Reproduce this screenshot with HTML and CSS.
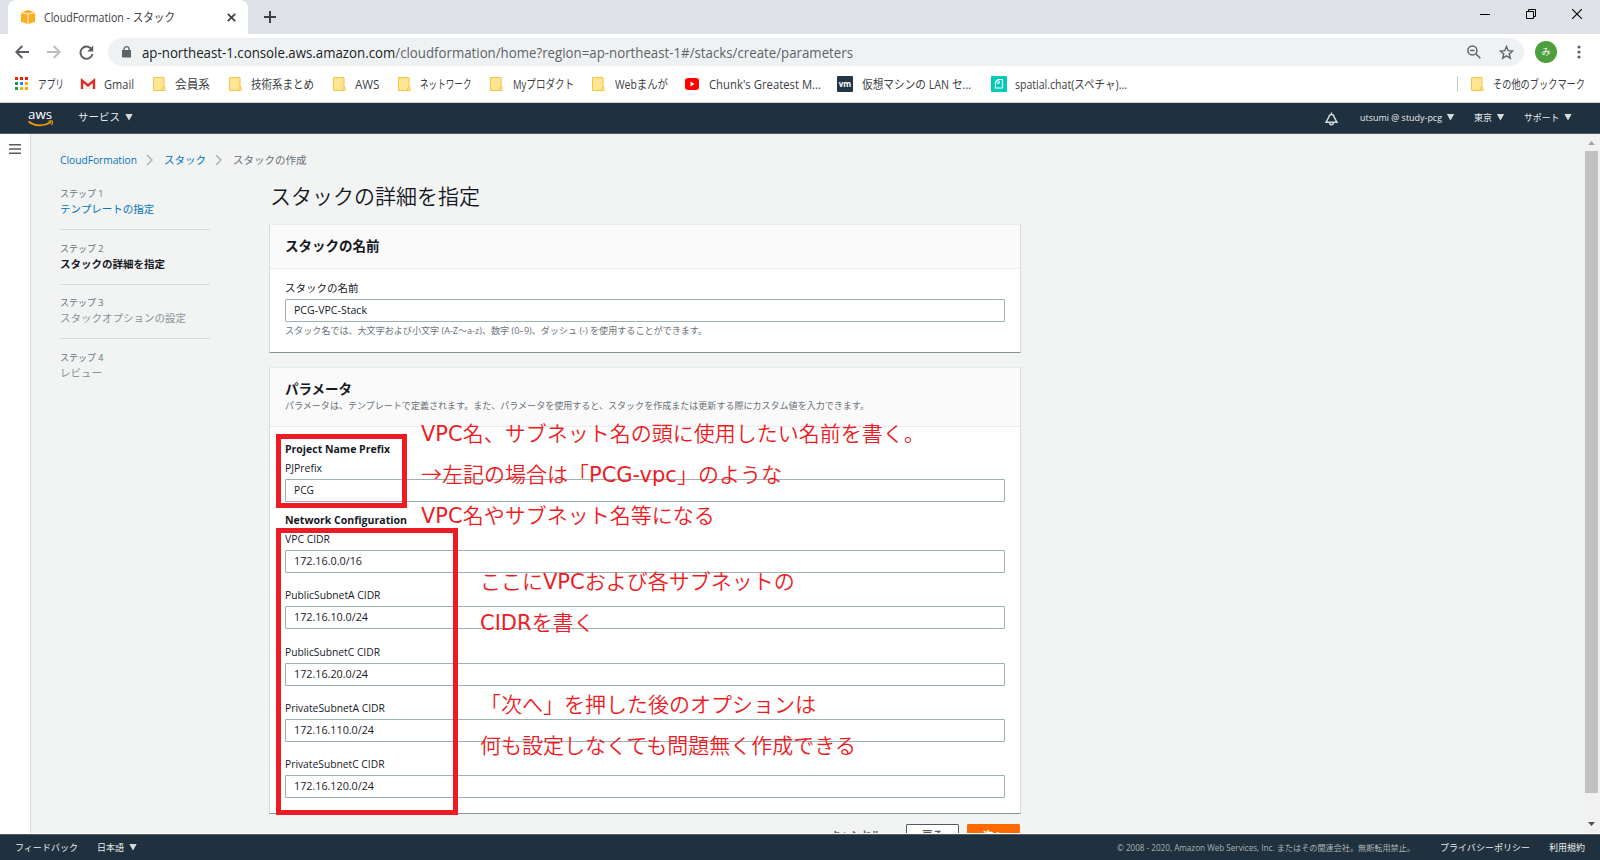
FILE: index.html
```html
<!DOCTYPE html>
<html lang="ja">
<head>
<meta charset="utf-8">
<title>CloudFormation - スタック</title>
<link rel="stylesheet" href="styles.css">
</head>
<body>
<svg width="0" height="0" class="defs">
  <symbol id="folder" viewBox="0 0 16 16"><path d="M2.5 1.5h10.5v9.5h1v3.5H2.5z" fill="#ffe694" stroke="#f6c445"/><path d="M11.7 14v-2.6l1-.9" fill="none" stroke="#f6c445"/></symbol>
</svg>

<header class="browser">
  <div class="tabstrip">
    <div class="tab">
      <svg class="tab-icon" width="16" height="16" viewBox="0 0 16 16"><path d="M8 1l7 2.2v9.6L8 15.3 1 12.8V3.2z" fill="#ffad1f"/><path d="M1.2 3.4L8 5.2l6.8-1.8M8 5.2v10" fill="none" stroke="#fff1c9" stroke-width="1.2"/></svg>
      <span class="fit tab-title" data-w="131">CloudFormation - スタック</span>
      <svg class="tab-close" width="9" height="9" viewBox="0 0 9 9"><path d="M.8.8l7.4 7.4M8.2.8L.8 8.2" stroke="#3c4043" stroke-width="1.7"/></svg>
    </div>
    <svg class="new-tab" width="12" height="12" viewBox="0 0 12 12"><path d="M6 0v12M0 6h12" stroke="#3c4043" stroke-width="2"/></svg>
    <div class="window-controls">
      <svg width="10" height="10" viewBox="0 0 10 10"><path d="M0 5.5h10" stroke="#000"/></svg>
      <svg width="10" height="10" viewBox="0 0 10 10"><path d="M.5 2.5h7v7h-7zM2.5 2.5v-2h7v7h-2" fill="none" stroke="#000"/></svg>
      <svg width="10" height="10" viewBox="0 0 10 10"><path d="M0 0l10 10M10 0L0 10" stroke="#000" stroke-width="1.1"/></svg>
    </div>
  </div>

  <div class="toolbar">
    <svg width="14" height="14" viewBox="0 0 14 14"><path d="M14 7H1.5M7.3 1L1.3 7l6 6" fill="none" stroke="#5a5d61" stroke-width="1.9"/></svg>
    <svg width="14" height="14" viewBox="0 0 14 14"><path d="M0 7h12.5M6.7 1l6 6-6 6" fill="none" stroke="#b9bbbe" stroke-width="1.8"/></svg>
    <svg width="15" height="15" viewBox="0 0 15 15"><path d="M12.6 4.2A6.1 6.1 0 1 0 13.5 9" fill="none" stroke="#5a5d61" stroke-width="1.9"/><path d="M14.2.5v6h-6z" fill="#5a5d61"/></svg>
    <div class="omnibox">
      <svg width="9" height="12" viewBox="0 0 9 12"><path d="M0 4h9v7.5H0z" fill="#5f6368"/><path d="M2 4.500V3a2.500 2.300 0 0 1 5 0v1.500" fill="none" stroke="#5f6368" stroke-width="1.300"/></svg>
      <span class="fit url" data-w="711"><span class="host">ap-northeast-1.console.aws.amazon.com</span>/cloudformation/home?region=ap-northeast-1#/stacks/create/parameters</span>
      <svg class="zoom-icon" width="14" height="14" viewBox="0 0 14 14"><circle cx="5.4" cy="5.4" r="4.5" fill="none" stroke="#5f6368" stroke-width="1.5"/><path d="M3.2 5.4h4.4M8.8 8.8l4.5 4.5" stroke="#5f6368" stroke-width="1.5"/></svg>
      <svg width="15" height="15" viewBox="0 0 15 15"><path d="M7.5 1.5l1.7 4.2 4.4.3-3.4 2.900 1.100 4.400-3.800-2.400-3.800 2.400 1.100-4.400L1.400 6l4.400-.3z" fill="none" stroke="#5f6368" stroke-width="1.400"/></svg>
    </div>
    <div class="avatar">み</div>
    <svg width="4" height="14" viewBox="0 0 4 14" fill="#5f6368"><circle cx="2" cy="2" r="1.6"/><circle cx="2" cy="7" r="1.6"/><circle cx="2" cy="12" r="1.6"/></svg>
  </div>

  <nav class="bookmarks">
    <a class="bm"><svg viewBox="0 0 16 16"><path d="M2 1h3v3H2zM7 1h3v3H7zM12 1h3v3h-3z" fill="#f21d0d"/><path d="M2 6h3v3H2zM2 11h3v3H2z" fill="#0f9d58"/><path d="M7 6h3v3H7z" fill="#1a8cff"/><path d="M12 6h3v3h-3zM7 11h3v3H7zM12 11h3v3h-3z" fill="#f9ab00"/></svg><span class="fit" data-w="26">アプリ</span></a>
    <a class="bm"><svg viewBox="0 0 16 16"><path d="M1 3h14v10H1z" fill="#f2f2f2"/><path d="M2 13V4.5l6 5 6-5V13" fill="none" stroke="#d93025" stroke-width="2.4"/></svg><span class="fit" data-w="30">Gmail</span></a>
    <a class="bm"><svg><use href="#folder"/></svg><span class="fit" data-w="35">会員系</span></a>
    <a class="bm"><svg><use href="#folder"/></svg><span class="fit" data-w="63">技術系まとめ</span></a>
    <a class="bm"><svg><use href="#folder"/></svg><span class="fit" data-w="24.5">AWS</span></a>
    <a class="bm"><svg><use href="#folder"/></svg><span class="fit" data-w="51.5">ネットワーク</span></a>
    <a class="bm"><svg><use href="#folder"/></svg><span class="fit" data-w="61">Myプロダクト</span></a>
    <a class="bm"><svg><use href="#folder"/></svg><span class="fit" data-w="53">Webまんが</span></a>
    <a class="bm"><svg viewBox="0 0 16 16"><rect x="1" y="2" width="14" height="12" rx="3" fill="#f00"/><path d="M6.5 5.5v5l4-2.5z" fill="#fff"/></svg><span class="fit" data-w="112">Chunk's Greatest M...</span></a>
    <a class="bm"><svg viewBox="0 0 16 16"><rect width="16" height="16" rx="1" fill="#253746"/><text x="8" y="10.5" class="vm" text-anchor="middle">vm</text></svg><span class="fit" data-w="109">仮想マシンの LAN セ...</span></a>
    <a class="bm last"><svg viewBox="0 0 16 16"><rect width="16" height="16" rx="1" fill="#00cdb8"/><path d="M7 3.500h4.500v8.500h-7V6zM8 4.500v2.700H6" fill="none" stroke="#fff" stroke-width="1.200"/></svg><span class="fit" data-w="112">spatial.chat(スペチャ)...</span></a>
    <a class="bm other"><svg><use href="#folder"/></svg><span class="fit" data-w="92">その他のブックマーク</span></a>
  </nav>
</header>

<div class="aws-nav">
  <svg class="aws-logo" width="26" height="20" viewBox="0 -2 26 20"><text x="0" y="8.800" class="aws-word" textLength="24" lengthAdjust="spacingAndGlyphs">aws</text><path d="M.5 11.500c6.500 5 15.500 5 22.300.8" fill="none" stroke="#f90" stroke-width="1.600"/><path d="M20.500 11.300c4-.9 4.900-.3 3.200 3.700" fill="none" stroke="#f90" stroke-width="1.300"/></svg>
  <span class="fit services" data-w="42">サービス</span><i class="tri"></i>
  <svg class="bell" width="13" height="14" viewBox="0 0 13 14"><path d="M1 10.300h11L9.200 5.200Q8.700 2.500 6.500 2.500T3.800 5.200zM6.500 2.500V.6M4.600 10.800a1.900 1.900 0 0 0 3.800 0" fill="none" stroke="#d5dbdb" stroke-width="1.400"/></svg>
  <span class="fit user" data-w="82">utsumi @ study-pcg</span><i class="tri"></i>
  <span class="fit menu" data-w="18">東京</span><i class="tri"></i>
  <span class="fit menu" data-w="35.5">サポート</span><i class="tri"></i>
</div>

<div class="console">
  <aside class="rail"><svg width="12" height="10" viewBox="0 0 12 10"><path d="M0 .8h12M0 5h12M0 9.200h12" stroke="#545b64" stroke-width="1.400"/></svg></aside>

  <main class="page">
    <div class="crumbs">
      <a class="fit" data-w="77">CloudFormation</a>
      <svg width="7" height="12" viewBox="0 0 7 12"><path d="M1 1l5 5-5 5" fill="none" stroke="#aab7b8" stroke-width="1.500"/></svg>
      <a>スタック</a>
      <svg width="7" height="12" viewBox="0 0 7 12"><path d="M1 1l5 5-5 5" fill="none" stroke="#aab7b8" stroke-width="1.500"/></svg>
      <span>スタックの作成</span>
    </div>

    <div class="columns">
      <ol class="steps">
        <li><small>ステップ 1</small><a>テンプレートの指定</a></li>
        <li><small>ステップ 2</small><b>スタックの詳細を指定</b></li>
        <li><small>ステップ 3</small><span>スタックオプションの設定</span></li>
        <li><small>ステップ 4</small><span>レビュー</span></li>
      </ol>

      <div class="content">
        <h1>スタックの詳細を指定</h1>

        <section class="card name-card">
          <header><h2>スタックの名前</h2></header>
          <div class="card-body">
            <label>スタックの名前</label>
            <div class="input"><span class="fit" data-w="73">PCG-VPC-Stack</span></div>
            <p class="hint"><span class="fit" data-w="422">スタック名では、大文字および小文字 (A-Z～a-z)、数字 (0–9)、ダッシュ (-) を使用することができます。</span></p>
          </div>
        </section>

        <section class="card param-card">
          <header><h2>パラメータ</h2><p><span class="fit" data-w="584">パラメータは、テンプレートで定義されます。また、パラメータを使用すると、スタックを作成または更新する際にカスタム値を入力できます。</span></p></header>
          <div class="card-body">
            <h3><span class="fit" data-w="105">Project Name Prefix</span></h3>
            <div class="field"><label><span class="fit" data-w="37">PJPrefix</span></label><div class="input"><span class="fit" data-w="20">PCG</span></div></div>
            <h3><span class="fit" data-w="122">Network Configuration</span></h3>
            <div class="field"><label><span class="fit" data-w="45">VPC CIDR</span></label><div class="input"><span class="fit" data-w="68">172.16.0.0/16</span></div></div>
            <div class="field"><label><span class="fit" data-w="95.5">PublicSubnetA CIDR</span></label><div class="input"><span class="fit" data-w="74">172.16.10.0/24</span></div></div>
            <div class="field"><label><span class="fit" data-w="95">PublicSubnetC CIDR</span></label><div class="input"><span class="fit" data-w="74">172.16.20.0/24</span></div></div>
            <div class="field"><label><span class="fit" data-w="100">PrivateSubnetA CIDR</span></label><div class="input"><span class="fit" data-w="80">172.16.110.0/24</span></div></div>
            <div class="field"><label><span class="fit" data-w="99.5">PrivateSubnetC CIDR</span></label><div class="input"><span class="fit" data-w="80">172.16.120.0/24</span></div></div>
          </div>
        </section>

        <div class="actions"><span class="fit cancel" data-w="50">キャンセル</span><button class="back">戻る</button><button class="next">次へ</button></div>
      </div>
    </div>
  </main>

  <div class="scrollbar"><i class="up"></i><i class="thumb"></i><i class="down"></i></div>
</div>

<footer class="footer">
  <span class="fit" data-w="63">フィードバック</span>
  <span class="fit lang" data-w="27">日本語</span><i class="tri"></i>
  <span class="fit copy" data-w="298">© 2008 - 2020, Amazon Web Services, Inc. またはその関連会社。無断転用禁止。</span>
  <span class="fit privacy" data-w="90">プライバシーポリシー</span>
  <span class="fit terms" data-w="36">利用規約</span>
</footer>

<div class="frame frame-prefix"></div>
<div class="frame frame-network"></div>
<div class="note note-prefix"><em>VPC</em>名、サブネット名の頭に使用したい名前を書く。<br>→左記の場合は「<em>PCG-vpc</em>」のような<br><em>VPC</em>名やサブネット名等になる</div>
<div class="note note-cidr">ここに<em>VPC</em>および各サブネットの<br><em>CIDR</em>を書く</div>
<div class="note note-next">「次へ」を押した後のオプションは<br>何も設定しなくても問題無く作成できる</div>

<script src="fit.js"></script>
</body>
</html>
```
FILE: styles.css
```css
* { box-sizing: border-box; }
body { margin: 0; width: 1600px; height: 860px; overflow: hidden; background: #fff; color: #16191f; font: 10.5px/15px "Open Sans", "Noto Sans CJK JP", sans-serif; display: flex; flex-direction: column; }
.defs { position: absolute; }
svg { display: block; flex: none; }
.fit { display: block; white-space: nowrap; transform-origin: 0 50%; flex: none; }

.browser { height: 103px; border-bottom: 1px solid #d5d8db; flex: none; color: #3c4043; }
.tabstrip { height: 34px; background: #dee1e6; display: flex; align-items: center; }
.tab { margin-left: 8px; width: 240px; height: 34px; background: #fff; border-radius: 8px 8px 0 0; display: flex; align-items: center; padding: 0 12px; font-size: 12px; }
.tab-title { margin-left: 8px; }
.tab-close { margin-left: auto; }
.new-tab { margin-left: 16px; }
.window-controls { margin-left: auto; margin-right: 18px; display: flex; gap: 36px; padding-bottom: 6px; }
.toolbar { height: 36px; display: flex; align-items: center; padding-left: 15px; gap: 18px; }
.omnibox { height: 28px; width: 1416px; background: #eff2f3; border-radius: 14px; display: flex; align-items: center; padding: 0 10px 0 14px; margin-left: -4px; }
.url { margin-left: 11px; font-size: 14px; color: #5f6368; }
.host { color: #202124; }
.zoom-icon { margin-left: auto; margin-right: 18px; }
.avatar { width: 22px; height: 22px; margin-left: -7px; border-radius: 50%; background: #4d9e3d; color: #fff; font-size: 9px; line-height: 22px; text-align: center; }
.toolbar > svg:last-child { margin-left: 2px; }
.bookmarks { display: flex; align-items: center; height: 28px; padding: 0 15px 0 13px; font-size: 12px; }
.bm { display: flex; align-items: center; gap: 8.5px; margin-right: 16.4px; }
.bm svg { width: 16px; height: 16px; }
.bm.last { margin-left: 4px; }
.bm.other { margin: 0 0 0 auto; border-left: 1px solid #c8cacd; padding-left: 11px; }
.vm { font: bold 8px "Open Sans", sans-serif; fill: #fff; }

.aws-nav { height: 31px; background: #1f303e; border-bottom: 1px solid #545b64; flex: none; display: flex; align-items: center; padding: 0 28px 2px; color: #e9ebed; font-size: 9.5px; }
.aws-logo { margin-top: 1px; }
.aws-word { font: 12px "Open Sans", sans-serif; fill: #fff; }
.services { margin-left: 24px; font-size: 10.5px; }
.tri { width: 8px; height: 7px; margin-left: 5px; background: #d5dbdb; clip-path: polygon(0 0, 100% 0, 50% 100%); flex: none; }
.bell { margin-left: auto; margin-top: 4px; }
.user { margin-left: 22px; }
.menu { margin-left: 19px; }

.console { height: 699px; flex: none; display: flex; overflow: hidden; background: #f2f3f3; }
.rail { width: 31px; flex: none; background: #fff; border-right: 1px solid #d5dbdb; padding: 10px 0 0 9px; }
.page { flex: 1; padding: 18px 0 0 29px; }
.crumbs { display: flex; align-items: center; height: 16px; color: #687078; }
.crumbs svg { margin: 0 11px 0 9px; }
a { color: #0073bb; }
.bm { color: inherit; }
.columns { display: flex; margin-top: 16px; }
.steps { list-style: none; margin: 2px 59px 0 0; padding: 0; width: 150px; color: #879596; }
.steps li { height: 54.5px; }
.steps li:not(:last-child)::after { content: ""; display: block; height: 1px; background: #d5dbdb; margin-top: 12px; }
.steps small, .steps a, .steps b, .steps li > span { display: block; line-height: 15px; }
.steps small { font-size: 9px; color: #687078; line-height: 16px; }
.steps b { color: #16191f; font-weight: 700; }
.content { width: 752px; }
h1 { font-size: 21px; line-height: 30px; font-weight: 350; margin: -3px 0 13px 1px; }
h2 { font-size: 13.5px; line-height: 18px; font-weight: 700; margin: 0; }
.card { background: #fff; border: 1px solid #d5dbdb; border-top-color: #eaeded; border-bottom-color: #879596; }
.card > header { background: #fafafa; border-bottom: 1px solid #eaeded; padding: 12px 15px; }
.card > header p { margin: 1px 0 0; font-size: 9px; line-height: 14px; color: #687078; }
.card-body { padding: 11px 15px 0; }
.name-card { height: 129px; margin-bottom: 14px; }
.name-card > header { height: 44px; }
.param-card { height: 447px; }
.param-card > header { height: 59px; }
.param-card .card-body { padding-top: 14px; }
label { display: block; line-height: 16px; height: 19px; color: #16191f; }
.input { height: 23px; border: 1px solid #9fb0b0; border-radius: 1px; padding: 0 8px; display: flex; align-items: center; line-height: 15px; color: #16191f; }
.hint { margin: 1px 0 0; font-size: 9px; line-height: 16px; color: #687078; }
h3 { margin: 0; font-size: 10.5px; line-height: 16px; height: 19px; }
.field { height: 56.25px; }
h3 + .field:nth-child(2) { height: 52px; }
.actions { display: flex; justify-content: flex-end; align-items: center; gap: 8px; margin-top: 10px; padding-right: 1px; font-weight: 700; color: #545b64; }
.cancel { margin-right: 17px; }
button { width: 53px; height: 23px; padding: 0; font: inherit; border: 1px solid #545b64; border-radius: 1px; background: #fff; color: #545b64; }
.next { background: #ff6a00; border-color: #ff6a00; color: #fff; }

.scrollbar { width: 17px; background: #f1f1f1; display: flex; flex-direction: column; align-items: center; }
.up { width: 7px; height: 4px; margin: 7px 0 6px; background: #a3a3a3; clip-path: polygon(0 100%, 100% 100%, 50% 0); }
.thumb { width: 13px; height: 642px; background: #c1c1c1; }
.down { width: 7px; height: 4px; margin-top: 29px; background: #505050; clip-path: polygon(0 0, 100% 0, 50% 100%); }

.footer { height: 27px; flex: none; border-top: 1px solid #fff; background: #1f303e; box-shadow: inset 0 1px #545b64; display: flex; align-items: center; padding: 0 15px; color: #eaeded; font-size: 9px; }
.lang { margin-left: 19px; }
.copy { margin-left: auto; color: #a9b3b5; font-size: 8.5px; }
.privacy { margin-left: 25px; }
.terms { margin-left: 19px; }

/* Annotations laid over the page */
.frame { position: absolute; left: 276px; border: 5px solid #ed1c24; }
.frame-prefix { top: 434px; width: 131px; height: 74px; }
.frame-network { top: 528px; width: 182px; height: 287px; }
.note { position: absolute; color: #ed1c24; font: 350 21px/41px "Noto Sans CJK JP", sans-serif; white-space: nowrap; }
.note em { font-family: "DejaVu Sans", sans-serif; font-style: normal; font-weight: 400; line-height: 1; }
.note-prefix { left: 421px; top: 412px; }
.note-cidr { left: 480px; top: 560px; }
.note-next { left: 480px; top: 683px; }
```
FILE: fit.js
```js
// Condense or widen each label to the width given in data-w.
document.querySelectorAll('.fit').forEach(function (el) {
  var target = parseFloat(el.dataset.w);
  el.style.width = 'max-content';
  var natural = el.getBoundingClientRect().width;
  el.style.width = target + 'px';
  el.style.transform = 'scaleX(' + target / natural + ')';
});
```
